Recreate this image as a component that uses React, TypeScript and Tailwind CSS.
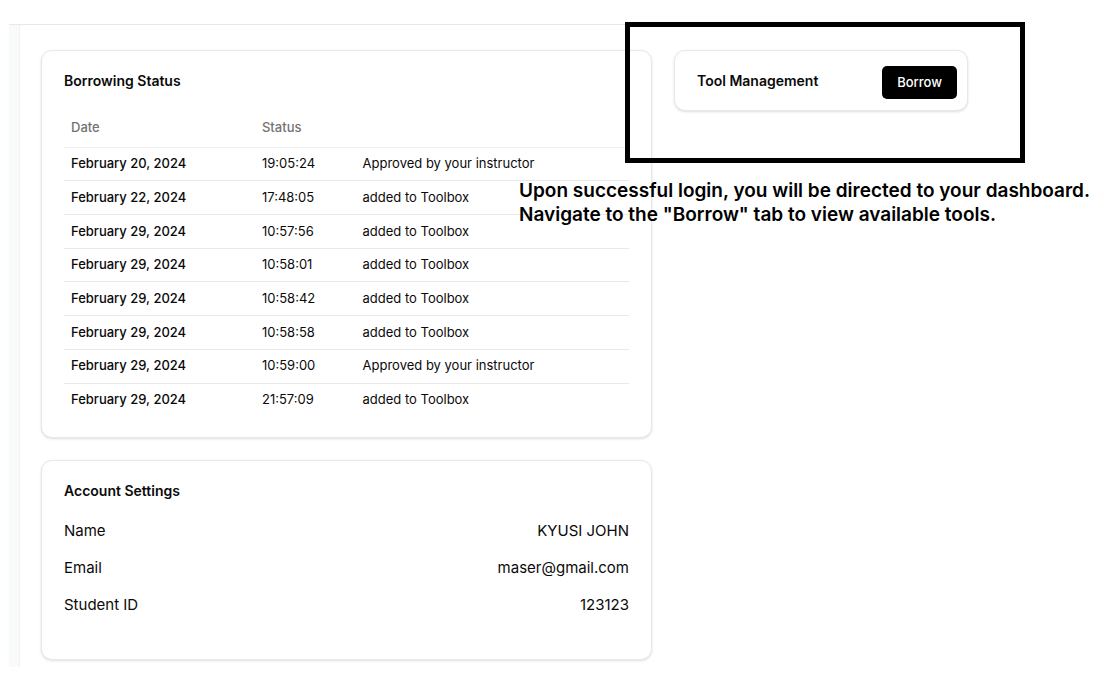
import type { ReactNode } from 'react';

const entries = [
  { date: 'February 20, 2024', time: '19:05:24', status: 'Approved by your instructor' },
  { date: 'February 22, 2024', time: '17:48:05', status: 'added to Toolbox' },
  { date: 'February 29, 2024', time: '10:57:56', status: 'added to Toolbox' },
  { date: 'February 29, 2024', time: '10:58:01', status: 'added to Toolbox' },
  { date: 'February 29, 2024', time: '10:58:42', status: 'added to Toolbox' },
  { date: 'February 29, 2024', time: '10:58:58', status: 'added to Toolbox' },
  { date: 'February 29, 2024', time: '10:59:00', status: 'Approved by your instructor' },
  { date: 'February 29, 2024', time: '21:57:09', status: 'added to Toolbox' },
];

const account = [
  { label: 'Name', value: 'KYUSI JOHN' },
  { label: 'Email', value: 'maser@gmail.com' },
  { label: 'Student ID', value: '123123' },
];

function Card({ children }: { children: ReactNode }) {
  return (
    <section className="rounded-[11px] border border-[#e8e8e8] bg-white px-[22px] shadow-sm">
      {children}
    </section>
  );
}

function CardTitle({ children }: { children: ReactNode }) {
  return (
    <h2 className="pt-[22px] text-[14px] leading-4 font-semibold whitespace-nowrap">{children}</h2>
  );
}

function BorrowingStatus() {
  return (
    <Card>
      <div className="pb-[21px]">
        <CardTitle>Borrowing Status</CardTitle>
        <table className="mt-5 h-[307px] w-full border-collapse text-left text-[13px]">
          <thead>
            <tr className="h-[38px] border-b border-[#f1f1f1] text-[#737373]">
              <th className="w-[33.8%] px-[7px] py-0 font-medium">Date</th>
              <th className="w-[17.8%] px-[7px] py-0 font-medium">Status</th>
              <td className="px-[7px] py-0" />
            </tr>
          </thead>
          <tbody>
            {entries.map((entry, i) => (
              <tr key={i} className="border-b border-[#e9e9e9] last:border-b-0">
                <td className="px-[7px] py-0 font-medium">{entry.date}</td>
                <td className="px-[7px] py-0">{entry.time}</td>
                <td className="px-[7px] py-0">{entry.status}</td>
              </tr>
            ))}
          </tbody>
        </table>
      </div>
    </Card>
  );
}

function AccountSettings() {
  return (
    <Card>
      <div className="pb-[43px]">
        <CardTitle>Account Settings</CardTitle>
        <dl className="mt-[21px] flex flex-col gap-[15px] text-[15px] leading-[22px]">
          {account.map((row) => (
            <div key={row.label} className="flex justify-between">
              <dt>{row.label}</dt>
              <dd>{row.value}</dd>
            </div>
          ))}
        </dl>
      </div>
    </Card>
  );
}

function ToolManagement() {
  return (
    <section className="flex items-start justify-between rounded-[11px] border border-[#e8e8e8] bg-white pr-[10px] pl-[22px] shadow-sm">
      <CardTitle>Tool Management</CardTitle>
      <button
        type="button"
        className="mt-[15px] mb-[11px] h-[33px] rounded-[5px] bg-black px-[15px] text-[13px] font-medium text-white"
      >
        Borrow
      </button>
    </section>
  );
}

export default function App() {
  return (
    <div className="overflow-hidden bg-white pt-6 pb-[15px] pl-[9px] font-['Inter',sans-serif] text-[#0a0a0a]">
      <div className="mr-20 flex border-t border-[#e8e8e8]">
        <aside className="w-[11px] shrink-0 border-r border-[#f3f3f3] bg-[#f9fafa]" />
        <main className="grid grow grid-cols-[611fr_294fr] items-start gap-[22px] pt-[25px] pr-14 pb-[7px] pl-[21px]">
          <div className="flex flex-col gap-[22px]">
            <BorrowingStatus />
            <AccountSettings />
          </div>
          <div className="relative">
            <ToolManagement />
            <div className="pointer-events-none absolute -top-[28px] -right-[57px] -left-[49px] h-[141px] border-[5px] border-black" />
            <p className="absolute top-[129px] -left-[155px] text-[19px] leading-6 font-semibold whitespace-nowrap text-black">
              Upon successful login, you will be directed to your dashboard.
              <br />
              Navigate to the "Borrow" tab to view available tools.
            </p>
          </div>
        </main>
      </div>
    </div>
  );
}
